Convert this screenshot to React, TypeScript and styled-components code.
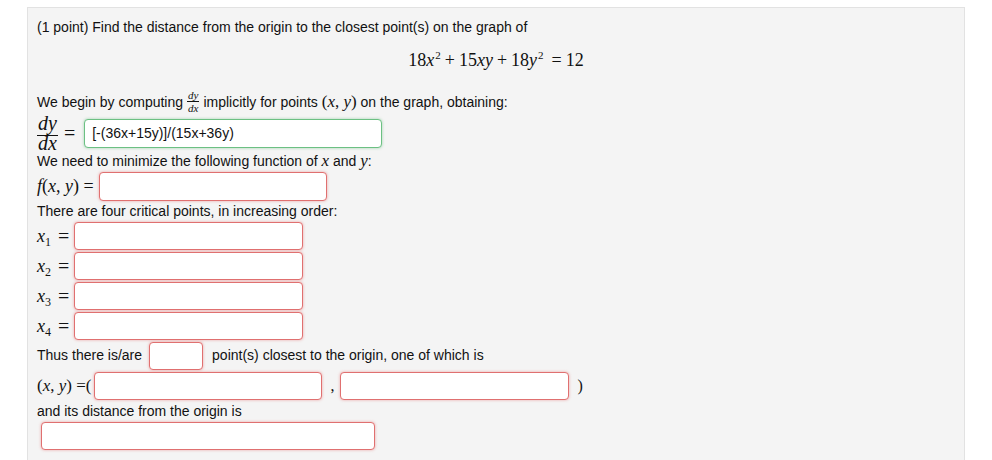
import styled, { createGlobalStyle } from "styled-components";

const GlobalStyle = createGlobalStyle`
  body {
    margin: 0;
    background: #fff;
    font-family: 'Liberation Sans', Arial, sans-serif;
    font-size: 14px;
    color: #111;
  }
`;

const Panel = styled.div`
  margin: 7px 27px 0 27px;
  min-height: 470px;
  padding: 9px 9px 0 9px;
  background: #f4f4f4;
  border: 1px solid #e2e2e2;
  border-bottom: none;
  box-sizing: border-box;
`;

const TextLine = styled.div`
  height: 20px;
  line-height: 20px;
  white-space: nowrap;
`;

const Row = styled.div<{ $height?: number }>`
  display: flex;
  align-items: center;
  height: ${(p) => p.$height ?? 30}px;
  white-space: nowrap;
`;

const Display = styled.div`
  margin-top: 11px;
  height: 24px;
  line-height: 24px;
  text-align: center;
  font-family: 'Liberation Serif', 'Times New Roman', serif;
  font-size: 18px;
`;

const Math = styled.span<{ $size?: number }>`
  font-family: 'Liberation Serif', 'Times New Roman', serif;
  font-size: ${(p) => p.$size ?? 18}px;
`;

const Var = styled.i`
  font-style: italic;
`;

const Sup = styled.sup`
  font-size: 11px;
  vertical-align: 7px;
  line-height: 0;
  margin-left: 1px;
`;

const Sub = styled.sub`
  font-size: 12px;
  vertical-align: -4px;
  line-height: 0;
  font-style: normal;
`;

const Op = styled.span<{ $wide?: boolean }>`
  margin: 0 4px 0 ${(p) => (p.$wide ? 8 : 4)}px;
`;

const Frac = styled.span<{ $size: number; $line: number; $side: number; $gap: number }>`
  display: inline-flex;
  flex-direction: column;
  align-items: center;
  font-family: 'Liberation Serif', 'Times New Roman', serif;
  font-style: italic;
  font-size: ${(p) => p.$size}px;
  line-height: ${(p) => p.$line}px;
  margin: 0 ${(p) => p.$side}px;

  & > span:first-child {
    padding-bottom: ${(p) => p.$gap}px;
  }
`;

const FracTop = styled.span`
  display: block;
  padding: 0 1px;
  border-bottom: 1px solid #111;
`;

const FracBottom = styled.span`
  display: block;
  padding: 0 1px;
`;

const Equals = styled.span<{ $left: number; $right: number }>`
  font-family: 'Liberation Serif', 'Times New Roman', serif;
  font-size: 20px;
  margin: 0 ${(p) => p.$right}px 0 ${(p) => p.$left}px;
`;

const AnswerBox = styled.div<{ $width: number; $height?: number; $ok?: boolean }>`
  width: ${(p) => p.$width}px;
  height: ${(p) => p.$height ?? 28}px;
  box-sizing: border-box;
  background: #fff;
  border-radius: 4px;
  border: 1px solid ${(p) => (p.$ok ? "#6cc083" : "#e07070")};
  box-shadow: 0 0 3px ${(p) => (p.$ok ? "rgba(60, 170, 90, 0.45)" : "rgba(230, 70, 70, 0.45)")};
  display: flex;
  align-items: center;
  padding-left: 7px;
  font-size: 14px;
  color: #111;
`;

const Label = styled.span`
  margin-bottom: 3px;
`;

const XLabel = styled.span`
  width: 21px;
  font-family: 'Liberation Serif', 'Times New Roman', serif;
  font-size: 18px;
  font-style: italic;
`;

const critical = [1, 2, 3, 4];

const App = () => {
  return (
    <>
      <GlobalStyle />
      <Panel>
        <TextLine>
          (1 point) Find the distance from the origin to the closest point(s) on the graph of
        </TextLine>

        <Display>
          18<Var>x</Var>
          <Sup>2</Sup>
          <Op>+</Op>15<Var>xy</Var>
          <Op>+</Op>18<Var>y</Var>
          <Sup>2</Sup>
          <Op $wide>=</Op>12
        </Display>

        <Row $height={27} style={{ marginTop: 16 }}>
          We begin by computing
          <Frac $size={11} $line={12} $side={4} $gap={0}>
            <FracTop>dy</FracTop>
            <FracBottom>dx</FracBottom>
          </Frac>
          implicitly for points&nbsp;
          <Math $size={17}>
            (<Var>x</Var>, <Var>y</Var>)
          </Math>
          &nbsp;on the graph, obtaining:
        </Row>

        <Row $height={36}>
          <Frac $size={20} $line={15} $side={0} $gap={4}>
            <FracTop>dy</FracTop>
            <FracBottom>dx</FracBottom>
          </Frac>
          <Equals $left={6} $right={9}>=</Equals>
          <AnswerBox $width={298} $height={29} $ok>
            [-(36x+15y)]/(15x+36y)
          </AnswerBox>
        </Row>

        <TextLine>
          We need to minimize the following function of <Math $size={17}><Var>x</Var></Math> and{" "}
          <Math $size={17}><Var>y</Var></Math>:
        </TextLine>

        <Row $height={30}>
          <Math $size={18}>
            <Var>f</Var>(<Var>x</Var>, <Var>y</Var>) =
          </Math>
          <AnswerBox $width={228} $height={29} style={{ marginLeft: 5 }} />
        </Row>

        <TextLine>There are four critical points, in increasing order:</TextLine>

        {critical.map((n) => (
          <Row key={n} $height={30}>
            <XLabel>
              x<Sub>{n}</Sub>
            </XLabel>
            <Equals $left={0} $right={5}>=</Equals>
            <AnswerBox $width={229} />
          </Row>
        ))}

        <Row $height={30}>
          <Label>Thus there is/are</Label>
          <AnswerBox $width={54} style={{ margin: "0 9px 0 7px" }} />
          <Label>point(s) closest to the origin, one of which is</Label>
        </Row>

        <Row $height={30}>
          <Math $size={17}>
            (<Var>x</Var>, <Var>y</Var>) =(
          </Math>
          <AnswerBox $width={228} style={{ marginLeft: 3 }} />
          <Math $size={16} style={{ margin: "0 6px 0 8px" }}>,</Math>
          <AnswerBox $width={229} />
          <Math $size={16} style={{ marginLeft: 8 }}>)</Math>
        </Row>

        <TextLine>and its distance from the origin is</TextLine>

        <Row $height={30}>
          <AnswerBox $width={334} style={{ marginLeft: 4 }} />
        </Row>
      </Panel>
    </>
  );
};

export default App;
